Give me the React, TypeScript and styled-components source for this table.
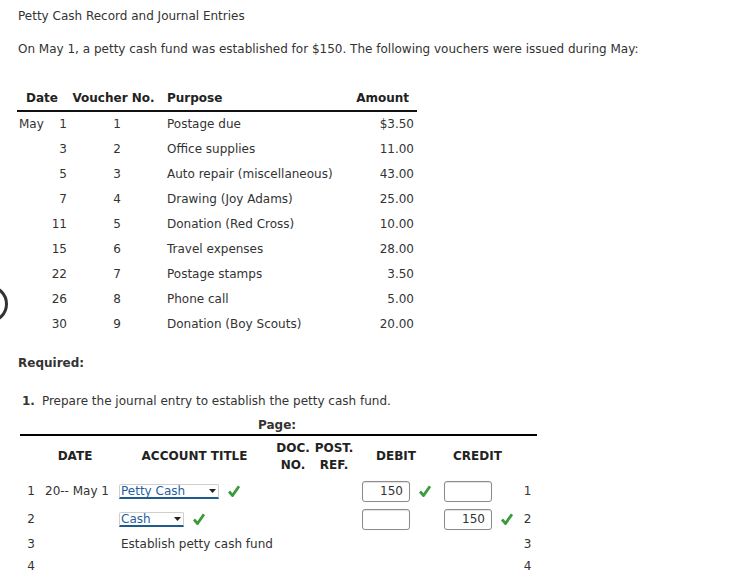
import React from "react";
import styled, { createGlobalStyle } from "styled-components";

const Global = createGlobalStyle`
  html, body { margin: 0; padding: 0; background: #fff; }
  body {
    font-family: "DejaVu Sans", Verdana, sans-serif;
    font-size: 12px;
    color: #333;
  }
`;

const Page = styled.div`
  position: relative;
  width: 756px;
  height: 576px;
  overflow: hidden;
  padding: 9px 0 0 18px;
  box-sizing: border-box;
`;

const Title = styled.div`
  line-height: 15px;
`;

const Para = styled.p`
  margin: 18px 0 0;
  line-height: 15px;
`;

const VTable = styled.div`
  margin: 34px 0 0 -1px;
  width: 400px;
  display: grid;
  grid-template-columns: 50px 100px 186px 64px;
`;

const VHead = styled.div<{ $align: string; $pr?: number }>`
  font-weight: bold;
  color: #222;
  line-height: 15px;
  padding-bottom: 4px;
  border-bottom: 2px solid #111;
  text-align: ${(p) => p.$align};
  padding-right: ${(p) => p.$pr ?? 0}px;
`;

const VCell = styled.div<{ $align: string; $pr?: number }>`
  height: 25px;
  line-height: 25px;
  text-align: ${(p) => p.$align};
  padding-right: ${(p) => p.$pr ?? 0}px;
`;

const DateCell = styled.div`
  height: 25px;
  line-height: 25px;
  display: flex;
  justify-content: space-between;
  padding-left: 2px;
`;

const Required = styled.div`
  margin-top: 19px;
  font-weight: bold;
  line-height: 15px;
`;

const Step = styled.div`
  margin: 23px 0 0 4px;
  line-height: 15px;
  display: flex;
  gap: 7px;
`;

const StepNum = styled.span`
  font-weight: bold;
`;

const Journal = styled.div`
  margin: 9px 0 0 2px;
  width: 517px;
`;

const PageLabel = styled.div`
  line-height: 15px;
  padding: 0 0 1px 238px;
  border-bottom: 2px solid #000;
  font-weight: bold;
`;

const JGrid = styled.div`
  display: grid;
  grid-template-columns: 22px 74px 157px 40px 42px 82px 81px 19px;
`;

const JHead = styled.div<{ $pr?: number }>`
  height: 41px;
  display: flex;
  align-items: center;
  justify-content: center;
  text-align: center;
  font-weight: bold;
  color: #222;
  line-height: 17px;
  padding-right: ${(p) => p.$pr ?? 0}px;
`;

const JCell = styled.div<{ $h: number; $align?: string; $pl?: number }>`
  height: ${(p) => p.$h}px;
  display: flex;
  align-items: center;
  justify-content: ${(p) => p.$align ?? "flex-start"};
  padding-left: ${(p) => p.$pl ?? 0}px;
  white-space: nowrap;
`;

const Select = styled.div<{ $w: number }>`
  box-sizing: border-box;
  width: ${(p) => p.$w}px;
  height: 15px;
  border: 1px solid #cfcfcf;
  border-bottom: 2px solid #1e5b8c;
  border-radius: 2px 2px 0 0;
  display: flex;
  align-items: center;
  justify-content: space-between;
  padding: 0 2px 0 1px;
  color: #1f5fa3;
  line-height: 12px;
`;

const Input = styled.div`
  box-sizing: border-box;
  width: 48px;
  height: 21px;
  border: 1px solid #8c8c8c;
  border-radius: 3px;
  box-shadow: inset 0 1px 1px rgba(0,0,0,0.12), 0 0 1px rgba(0,0,0,0.15);
  text-align: right;
  padding-right: 6px;
  line-height: 19px;
  color: #333;
  font-size: 12px;
`;

const Check = styled.svg`
  margin-left: 9px;
  flex: none;
`;

const Ring = styled.div`
  position: absolute;
  left: -30px;
  top: 285px;
  width: 38px;
  height: 38px;
  box-sizing: border-box;
  border: 3px solid #333;
  border-radius: 50%;
`;

const Arrow = () => (
  <svg width="7" height="4" viewBox="0 0 7 4">
    <path d="M0 0 L7 0 L3.5 4 Z" fill="#222" />
  </svg>
);

const Tick = () => (
  <Check width="12" height="12" viewBox="0 0 12 12">
    <path d="M1 6.5 L4.5 10.5 L11 1.2" fill="none" stroke="#3a9b3a" strokeWidth="2.8" strokeLinejoin="miter" />
  </Check>
);

const vouchers = [
  ["May", "1", "1", "Postage due", "$3.50"],
  ["", "3", "2", "Office supplies", "11.00"],
  ["", "5", "3", "Auto repair (miscellaneous)", "43.00"],
  ["", "7", "4", "Drawing (Joy Adams)", "25.00"],
  ["", "11", "5", "Donation (Red Cross)", "10.00"],
  ["", "15", "6", "Travel expenses", "28.00"],
  ["", "22", "7", "Postage stamps", "3.50"],
  ["", "26", "8", "Phone call", "5.00"],
  ["", "30", "9", "Donation (Boy Scouts)", "20.00"],
];

export default function App() {
  return (
    <>
      <Global />
      <Page>
        <Ring />
        <Title>Petty Cash Record and Journal Entries</Title>
        <Para>
          On May 1, a petty cash fund was established for $150. The following vouchers were issued during May:
        </Para>
        <VTable>
          <VHead $align="center" $pr={-3}>Date</VHead>
          <VHead $align="center" $pr={7}>Voucher No.</VHead>
          <VHead $align="left">Purpose</VHead>
          <VHead $align="right" $pr={8}>Amount</VHead>
          {vouchers.map((v, i) => (
            <React.Fragment key={i}>
              <DateCell>
                <span>{v[0]}</span>
                <span>{v[1]}</span>
              </DateCell>
              <VCell $align="center">{v[2]}</VCell>
              <VCell $align="left">{v[3]}</VCell>
              <VCell $align="right" $pr={3}>{v[4]}</VCell>
            </React.Fragment>
          ))}
        </VTable>
        <Required>Required:</Required>
        <Step>
          <StepNum>1.</StepNum>
          <span>Prepare the journal entry to establish the petty cash fund.</span>
        </Step>
        <Journal>
          <PageLabel>Page:</PageLabel>
          <JGrid>
            <JHead />
            <JHead $pr={8}>DATE</JHead>
            <JHead>ACCOUNT TITLE</JHead>
            <JHead>DOC.<br />NO.</JHead>
            <JHead>POST.<br />REF.</JHead>
            <JHead>DEBIT</JHead>
            <JHead>CREDIT</JHead>
            <JHead />

            <JCell $h={28} $align="center">1</JCell>
            <JCell $h={28} $pl={3}>20-- May 1</JCell>
            <JCell $h={28} $pl={3}>
              <Select $w={100}><span>Petty Cash</span><Arrow /></Select>
              <Tick />
            </JCell>
            <JCell $h={28} />
            <JCell $h={28} />
            <JCell $h={28} $pl={7}>
              <Input>150</Input>
              <Tick />
            </JCell>
            <JCell $h={28} $pl={7}>
              <Input />
            </JCell>
            <JCell $h={28} $align="center">1</JCell>

            <JCell $h={28} $align="center">2</JCell>
            <JCell $h={28} />
            <JCell $h={28} $pl={3}>
              <Select $w={65}><span>Cash</span><Arrow /></Select>
              <Tick />
            </JCell>
            <JCell $h={28} />
            <JCell $h={28} />
            <JCell $h={28} $pl={7}>
              <Input />
            </JCell>
            <JCell $h={28} $pl={7}>
              <Input>150</Input>
              <Tick />
            </JCell>
            <JCell $h={28} $align="center">2</JCell>

            <JCell $h={22} $align="center">3</JCell>
            <JCell $h={22} />
            <JCell $h={22} $pl={5}>Establish petty cash fund</JCell>
            <JCell $h={22} />
            <JCell $h={22} />
            <JCell $h={22} />
            <JCell $h={22} />
            <JCell $h={22} $align="center">3</JCell>

            <JCell $h={22} $align="center">4</JCell>
            <JCell $h={22} />
            <JCell $h={22} />
            <JCell $h={22} />
            <JCell $h={22} />
            <JCell $h={22} />
            <JCell $h={22} />
            <JCell $h={22} $align="center">4</JCell>
          </JGrid>
        </Journal>
      </Page>
    </>
  );
}
